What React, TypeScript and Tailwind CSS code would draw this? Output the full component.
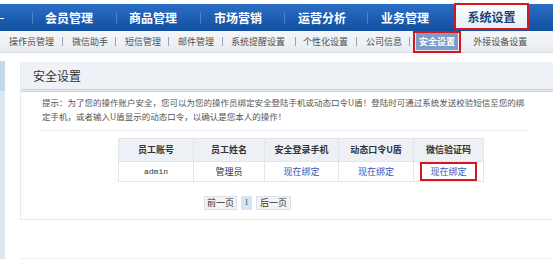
import React from "react";

const navItems = ["会员管理", "商品管理", "市场营销", "运营分析", "业务管理"];

function Sep() {
  return <div className="w-px h-[12px] bg-[#5d8fd0] opacity-70" />;
}

function SubSep({ ml }: { ml: string }) {
  return <div className={`w-px h-[9px] bg-[#9aa3ad] ${ml}`} />;
}

export default function App() {
  const cjk = { fontFamily: '"Noto Sans CJK SC", "Noto Sans", sans-serif' };
  return (
    <div className="w-[553px] h-[259px] overflow-hidden bg-white relative" style={cjk}>
      <div className="h-[4px] bg-white" />
      <div className="h-[27px] flex items-center bg-gradient-to-b from-[#2a6fc6] to-[#114f9f] relative">
        <div className="w-[32px] h-full flex items-center">
          <div className="w-[4px] h-px bg-white ml-0 mt-[1px]" />
        </div>
        <Sep />
        <div className="w-[83px] pl-[12px] text-[12px] font-bold text-white leading-none">{navItems[0]}</div>
        <Sep />
        <div className="w-[83px] pl-[12px] text-[12px] font-bold text-white leading-none">{navItems[1]}</div>
        <Sep />
        <div className="w-[83px] pl-[13px] text-[12px] font-bold text-white leading-none">{navItems[2]}</div>
        <Sep />
        <div className="w-[82px] pl-[13px] text-[12px] font-bold text-white leading-none">{navItems[3]}</div>
        <Sep />
        <div className="w-[86px] pl-[13px] text-[12px] font-bold text-white leading-none">{navItems[4]}</div>
        <div className="w-[75px] h-[27px] border-2 border-[#d3161f] bg-gradient-to-b from-white to-[#e4eef9] flex items-center justify-center self-start -mt-[1px]">
          <span className="text-[12px] font-bold text-[#1b3f78] leading-none">系统设置</span>
        </div>
      </div>
      <div className="h-[22px] flex items-center bg-gradient-to-b from-[#f4f6f9] to-[#e8ecf1] border-b border-[#d9dee5] text-[9px] text-[#505050] leading-none">
        <span className="ml-[9px]">操作员管理</span>
        <SubSep ml="ml-[8px]" />
        <span className="ml-[9px]">微信助手</span>
        <SubSep ml="ml-[7px]" />
        <span className="ml-[9px]">短信管理</span>
        <SubSep ml="ml-[7px]" />
        <span className="ml-[9px]">邮件管理</span>
        <SubSep ml="ml-[8px]" />
        <span className="ml-[8px]">系统提醒设置</span>
        <SubSep ml="ml-[10px]" />
        <span className="ml-[7px]">个性化设置</span>
        <SubSep ml="ml-[8px]" />
        <span className="ml-[9px]">公司信息</span>
        <SubSep ml="ml-[7px]" />
        <div className="ml-[3px] border-2 border-[#d3161f] p-[1px] h-[22px] flex items-center">
          <div className="h-[17px] px-[3px] bg-[#7d9cc6] flex items-center text-white font-bold">安全设置</div>
        </div>
        <span className="ml-[12px]">外接设备设置</span>
      </div>
      <div className="flex">
        <div className="w-[5px] mt-[8px] flex flex-col">
          <div className="h-[30px] bg-[#c6d8ee]" />
          <div className="h-[170px] bg-[#dce7f4]" />
        </div>
        <div className="ml-[15px] flex-1 mt-[9px] flex flex-col">
          <div className="border-l border-[#e6e9ee]">
            <div className="h-[30px] bg-[#eef1f5] flex items-center pl-[12px] text-[12px] text-[#333] border-b-[3px] border-double border-[#c8ced6]">
              安全设置
            </div>
            <div className="h-[128px] bg-white border-b border-[#e4e7eb] flex flex-col">
              <div className="ml-[21px] mt-[3px] text-[8.5px] leading-[14px] text-[#555] whitespace-nowrap">
                提示：为了您的操作账户安全，您可以为您的操作员绑定安全登陆手机或动态口令U盾！登陆时可通过系统发送校验短信至您的绑
                <br />
                定手机，或者输入U盾显示的动态口令，以确认是您本人的操作！
              </div>
              <div className="ml-[20px] mr-[26px] mt-[7px] border-t border-dotted border-[#d5d9de]" />
              <div className="ml-[97px] mt-[7px] w-[366px] border border-[#e2e6eb] text-[9px]">
                <div className="h-[22px] bg-[#edf1f6] flex font-bold text-[#333]">
                  <div className="w-[75px] flex items-center justify-center border-r border-[#e2e6eb]">员工账号</div>
                  <div className="w-[71px] flex items-center justify-center border-r border-[#e2e6eb]">员工姓名</div>
                  <div className="w-[74px] flex items-center justify-center border-r border-[#e2e6eb]">安全登录手机</div>
                  <div className="w-[75px] flex items-center justify-center border-r border-[#e2e6eb]">动态口令U盾</div>
                  <div className="flex-1 flex items-center justify-center">微信验证码</div>
                </div>
                <div className="h-[20px] flex border-t border-[#e2e6eb] bg-white">
                  <div className="w-[75px] flex items-center justify-center border-r border-[#e2e6eb] text-[8px] text-[#333]" style={{ fontFamily: '"Liberation Mono", monospace' }}>admin</div>
                  <div className="w-[71px] flex items-center justify-center border-r border-[#e2e6eb] text-[#333]">管理员</div>
                  <div className="w-[74px] flex items-center justify-center border-r border-[#e2e6eb] text-[#3656b0]">现在绑定</div>
                  <div className="w-[75px] flex items-center justify-center border-r border-[#e2e6eb] text-[#3656b0]">现在绑定</div>
                  <div className="flex-1 flex items-center justify-center">
                    <div className="w-[57px] h-[19px] border-2 border-[#d3161f] flex items-center justify-center text-[#3656b0]">现在绑定</div>
                  </div>
                </div>
              </div>
              <div className="ml-[183px] mt-[14px] flex items-center gap-[4px] text-[9px] text-[#333]">
                <div className="h-[14px] w-[33px] border border-[#dcdfe3] bg-[#f2f3f5] flex items-center justify-center">前一页</div>
                <div className="h-[14px] w-[11px] bg-[#d3e5f6] flex items-center justify-center text-[#555]" style={{ fontFamily: '"Liberation Serif", serif' }}>1</div>
                <div className="h-[14px] w-[35px] border border-[#dcdfe3] bg-[#f2f3f5] flex items-center justify-center">后一页</div>
              </div>
            </div>
          </div>
          <div className="mt-[38px] h-[20px] bg-[#edf1f6] relative">
            <div className="ml-[5px] mt-[5px] w-[75px] h-[10px] border-t-2 border-x border-[#4a86d0] bg-white" />
          </div>
        </div>
      </div>
    </div>
  );
}
